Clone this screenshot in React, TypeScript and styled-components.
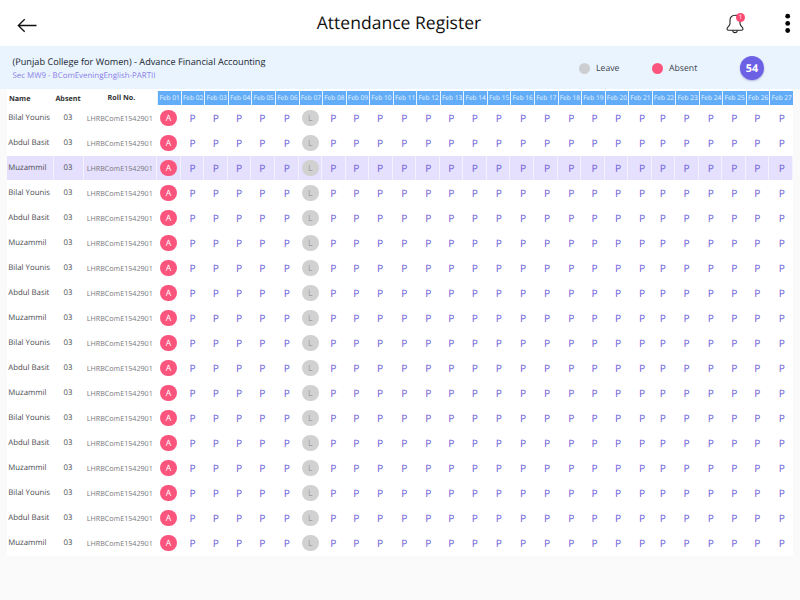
import React from "react";
import styled, { createGlobalStyle, css } from "styled-components";

const GlobalStyle = createGlobalStyle`
  * { box-sizing: border-box; }
  body {
    margin: 0;
    background: #fafafa;
    font-family: "Open Sans", "Noto Sans", sans-serif;
    text-rendering: geometricPrecision;
    overflow: hidden;
  }
`;

const Page = styled.div`
  width: 800px;
  height: 600px;
  background: #fafafa;
`;

const TopBar = styled.header`
  display: grid;
  grid-template-columns: 300px 1fr 300px;
  align-items: center;
  height: 46px;
  background: #fff;
`;

const BackButton = styled.button`
  display: flex;
  width: 20px;
  margin: 5px 0 0 17px;
  padding: 0;
  border: 0;
  background: none;
`;

const Title = styled.h1`
  margin: 0 0 0 -2px;
  font-size: 17.55px;
  line-height: 24px;
  font-weight: 400;
  color: #111;
  text-align: center;
  white-space: nowrap;
`;

const Actions = styled.div`
  display: flex;
  justify-content: flex-end;
  align-items: center;
  gap: 38px;
  padding-right: 7px;
`;

const BellButton = styled.div`
  position: relative;
  display: flex;
  width: 20px;
  height: 22px;
`;

const Badge = styled.span`
  position: absolute;
  top: 1px;
  right: 0;
  width: 9px;
  height: 9px;
  border-radius: 50%;
  background: #fb4b74;
  color: #fff;
  font-size: 6px;
  line-height: 9px;
  text-align: center;
`;

const ClassBar = styled.section`
  display: flex;
  align-items: center;
  height: 43px;
  padding-left: 12.5px;
  background: #e9f4ff;
`;

const ClassInfo = styled.div`
  width: 566.5px;
  padding-top: 4.4px;
  white-space: nowrap;
`;

const ClassName = styled.div`
  font-size: 9.18px;
  line-height: 14px;
  color: #20262e;
`;

const Section = styled.div`
  font-size: 7.9px;
  line-height: 15px;
  color: #8c7fe6;
`;

const Legend = styled.div<{ $width: number }>`
  display: flex;
  align-items: center;
  gap: 6px;
  width: ${(p) => p.$width}px;
  padding-top: 1px;
  font-size: 8.7px;
  line-height: 12px;
  color: #3b4149;
`;

const Dot = styled.span<{ $color: string }>`
  width: 11px;
  height: 11px;
  border-radius: 50%;
  background: ${(p) => p.$color};
`;

const Total = styled.div`
  width: 24px;
  height: 24px;
  margin: 1px 0 0 1px;
  border-radius: 50%;
  background: #6c60e4;
  box-shadow: 0 1px 2px rgba(70, 60, 140, 0.35);
  color: #fff;
  font-size: 10.8px;
  font-weight: 700;
  line-height: 25px;
  text-align: center;
`;

const Register = styled.main`
  width: 786px;
  margin-left: 7px;
  padding-bottom: 1px;
  background: #fff;
`;

const rowGrid = css`
  display: grid;
  grid-template-columns: 46.5px 30px 73.8px repeat(27, minmax(0, 1fr));
`;

const HeadRow = styled.div`
  ${rowGrid}
  height: 16px;
  padding-top: 1.6px;
`;

const HeadCell = styled.div`
  padding: 1.4px 0 0 1.9px;
  font-size: 7.2px;
  line-height: 14px;
  font-weight: 700;
  color: #333;
  white-space: nowrap;
`;

const RollHeadCell = styled(HeadCell)`
  padding: 0 0 0 24px;
`;

const DateCell = styled.div`
  display: flex;
  justify-content: center;
  height: 14.4px;
  border-left: 1px solid #e8f5ff;
  background: #63adf8;
  color: #e7f4ff;
  font-size: 6.55px;
  line-height: 14.8px;
  white-space: nowrap;
`;

const Cell = styled.div`
  display: flex;
  align-items: center;
  height: 24px;
  margin-top: 1px;
  border-right: 1px solid #fff;
  white-space: nowrap;
`;

const Row = styled.div<{ $active: boolean }>`
  ${rowGrid}
  height: 25px;
  ${(p) =>
    p.$active &&
    css`
      ${Cell} {
        background: #e5e0fd;
        border-right-color: #f5f2ff;
      }
    `}
`;

const NameCell = styled(Cell)`
  padding: 0 0 1px 1.3px;
  font-size: 7.8px;
  color: #4b4b50;
`;

const AbsentCell = styled(Cell)`
  justify-content: center;
  padding: 0 0 1px 0;
  font-size: 7.8px;
  color: #4b4b50;
`;

const RollCell = styled(Cell)`
  padding: 1px 0 0 3.3px;
  font-size: 7.15px;
  color: #77777b;
`;

const MarkCell = styled(Cell)<{ $shift: number }>`
  justify-content: center;
  text-indent: ${(p) => p.$shift * 2}px;
  color: #6a5ed8;
  font-size: 10.2px;
  line-height: 14px;
`;

const Mark = styled.span<{ $kind: "A" | "L" }>`
  flex: none;
  width: 16.5px;
  height: 16.5px;
  margin-left: ${(p) => (p.$kind === "L" ? "1px" : "0")};
  border-radius: 50%;
  background: ${(p) => (p.$kind === "A" ? "#fb557d" : "#d1d1d2")};
  color: ${(p) => (p.$kind === "A" ? "#fff" : "#9c9c9e")};
  font-size: 8.6px;
  line-height: 16.5px;
  font-weight: ${(p) => (p.$kind === "A" ? 500 : 400)};
  text-align: center;
  text-indent: 0;
`;

const NAMES = ["Bilal Younis", "Abdul Basit", "Muzammil"];
const STUDENTS = Array.from({ length: 18 }, (_, i) => NAMES[i % 3]);
const DAYS = Array.from({ length: 27 }, (_, i) => String(i + 1).padStart(2, "0"));

// Horizontal offset of each day's letter from the middle of its column.
const SHIFTS = [
  0, 0.4, 0.2, -0.1, -0.4, 0.5, 0, 0, -0.5, -0.5, 0.3, 0.7, 0.2, 0.1, 0.6, 1.4, 1.9,
  2.4, 2.3, 2.2, 2.7, -0.3, 0.1, 0.7, 0.6, 0.2, 1,
];

const BackIcon = () => (
  <svg width="20" height="16" viewBox="0 0 20 16" fill="none" stroke="#111" strokeWidth="1.3">
    <path d="M19.5 7.5H1.5M7.7 1.2L1.3 7.5L7.7 13.8" />
  </svg>
);

const BellIcon = () => (
  <svg width="20" height="22" viewBox="0 0 20 22" fill="none" stroke="#222" strokeWidth="1.1">
    <path d="M10 3.2C6.9 3.2 5 5.3 5 8.2V11.5C5 14.2 2 15 2 17C2 17.8 2.6 18.2 3.4 18.2H16.6C17.4 18.2 18 17.8 18 17C18 15 15 14.2 15 11.5V8.2C15 5.3 13.1 3.2 10 3.2Z" />
    <path d="M7.6 18.2C7.8 19.8 8.7 20.6 10 20.6S12.2 19.8 12.4 18.2" />
  </svg>
);

const MoreIcon = () => (
  <svg width="10" height="20" viewBox="0 0 10 20" fill="#050505">
    <circle cx="4.7" cy="3.2" r="2.4" />
    <circle cx="4.7" cy="10.4" r="2.4" />
    <circle cx="4.7" cy="17.5" r="2.4" />
  </svg>
);

function renderMark(col: number) {
  if (col === 0) return <Mark $kind="A">A</Mark>;
  if (col === 6) return <Mark $kind="L">L</Mark>;
  return "P";
}

export default function App() {
  return (
    <>
      <GlobalStyle />
      <Page>
        <TopBar>
          <BackButton aria-label="Back">
            <BackIcon />
          </BackButton>
          <Title>Attendance Register</Title>
          <Actions>
            <BellButton>
              <BellIcon />
              <Badge>1</Badge>
            </BellButton>
            <MoreIcon />
          </Actions>
        </TopBar>
        <ClassBar>
          <ClassInfo>
            <ClassName>(Punjab College for Women) - Advance Financial Accounting</ClassName>
            <Section>Sec MW9 - BComEveningEnglish-PARTII</Section>
          </ClassInfo>
          <Legend $width={73}>
            <Dot $color="#cdced1" />
            Leave
          </Legend>
          <Legend $width={87}>
            <Dot $color="#fb557d" />
            Absent
          </Legend>
          <Total>54</Total>
        </ClassBar>
        <Register>
          <HeadRow>
            <HeadCell>Name</HeadCell>
            <HeadCell>Absent</HeadCell>
            <RollHeadCell>Roll No.</RollHeadCell>
            {DAYS.map((day) => (
              <DateCell key={day}>Feb {day}</DateCell>
            ))}
          </HeadRow>
          {STUDENTS.map((name, row) => (
            <Row key={row} $active={row === 2}>
              <NameCell>{name}</NameCell>
              <AbsentCell>03</AbsentCell>
              <RollCell>LHRBComE1542901</RollCell>
              {DAYS.map((day, col) => (
                <MarkCell key={day} $shift={SHIFTS[col]}>
                  {renderMark(col)}
                </MarkCell>
              ))}
            </Row>
          ))}
        </Register>
      </Page>
    </>
  );
}
